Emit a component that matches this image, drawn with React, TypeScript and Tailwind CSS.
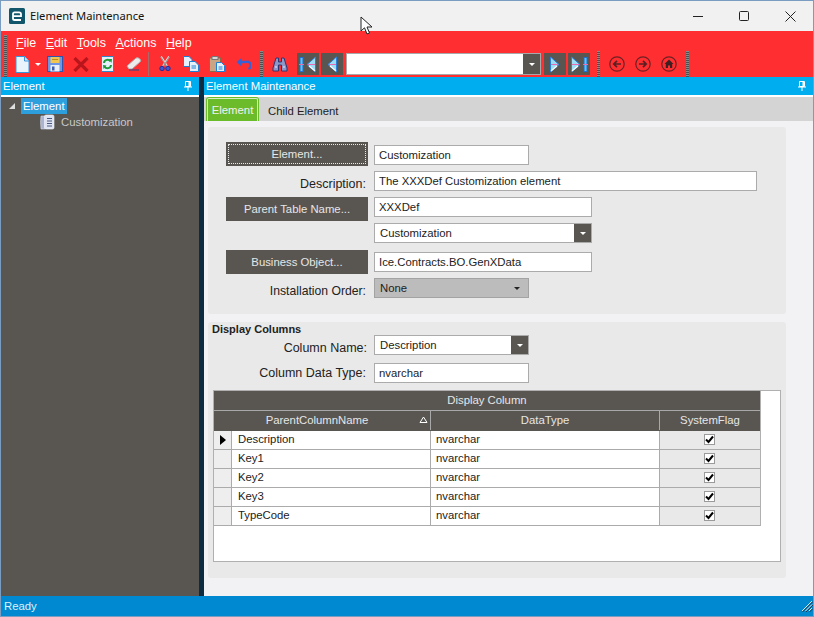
const rows = ['Description', 'Key1', 'Key2', 'Key3', 'TypeCode'];

function Grip({ className = '' }: { className?: string }) {
  return (
    <div
      className={`w-[3px] bg-[repeating-linear-gradient(to_bottom,#8a8a8a_0,#8a8a8a_1px,#4f4f4f_1px,#4f4f4f_2px)] ${className}`}
    />
  );
}

function PinIcon() {
  return (
    <svg width="8" height="10" viewBox="0 0 8 10">
      <path d="M1.5 .5 H6.5 V5.5 H1.5 Z" fill="none" stroke="#fff" />
      <path d="M4.5 1 H6 V5 H4.5 Z" fill="#fff" />
      <path d="M0 6 H8 M4 6 V10" stroke="#fff" />
    </svg>
  );
}

function ActionButton({ label, focused }: { label: string; focused?: boolean }) {
  return (
    <button className="w-[142px] h-6 bg-[#595652] text-[#e6e6e6] flex items-center justify-center shrink-0 p-[2px]">
      <span
        className={`w-full h-full flex items-center justify-center ${focused ? 'border border-dotted border-[#e8e8e8]' : ''}`}
      >
        {label}
      </span>
    </button>
  );
}

function TextBox({ value, width }: { value: string; width: string }) {
  return (
    <div className={`h-5 bg-white border border-[#ababab] px-1 text-[#222] leading-[18px] ${width}`}>{value}</div>
  );
}

function ComboBox({ value, width }: { value: string; width: string }) {
  return (
    <div className={`h-5 bg-white border border-[#ababab] flex text-[#222] ${width}`}>
      <span className="flex-1 pl-[5px] leading-[18px]">{value}</span>
      <span className="w-[17px] bg-[#595652] flex items-center justify-center">
        <span className="w-0 h-0 border-x-[3px] border-x-transparent border-t-[3px] border-t-white" />
      </span>
    </div>
  );
}

function NavButton({ children }: { children: React.ReactNode }) {
  return <div className="w-[22px] h-[22px] bg-[#595652] flex items-center justify-center shrink-0">{children}</div>;
}

function TriLeft() {
  return (
    <svg width="12" height="17" viewBox="0 0 12 17">
      <path d="M10.5 1 L2 8.5 L10.5 16 Z" fill="#9fdcf5" stroke="#2a7fd8" strokeWidth="1" />
      <path d="M3 8.5 H10" stroke="#e86bb0" strokeWidth="1" />
      <path d="M4 10 L10 15" stroke="#fff" strokeWidth="1.2" />
    </svg>
  );
}

function TriRight() {
  return (
    <svg width="12" height="17" viewBox="0 0 12 17">
      <path d="M1.5 1 L10 8.5 L1.5 16 Z" fill="#9fdcf5" stroke="#2a7fd8" strokeWidth="1" />
      <path d="M2 8.5 H9" stroke="#e86bb0" strokeWidth="1" />
      <path d="M2 15 L8 10" stroke="#fff" strokeWidth="1.2" />
    </svg>
  );
}

function Bar() {
  return (
    <svg width="5" height="15" viewBox="0 0 5 15">
      <rect x="1" y="0.5" width="3" height="14" fill="#63c3f2" stroke="#1c6fd0" strokeWidth="1" />
      <path d="M0 7.5 H5" stroke="#e86bb0" />
    </svg>
  );
}

function DocIcon() {
  return (
    <svg width="15" height="17" viewBox="0 0 15 17">
      <path d="M1 .5 H9.5 L14 5 V16.5 H1 Z" fill="#e9f3fb" stroke="#3a94dc" />
      <path d="M9.5 .5 V5 H14" fill="#cfe5f5" stroke="#3a94dc" />
    </svg>
  );
}

function SaveIcon() {
  return (
    <svg width="16" height="16" viewBox="0 0 16 16">
      <rect x=".5" y=".5" width="15" height="15" fill="#6f96e4" stroke="#2c55b0" />
      <rect x="3.5" y="1" width="9" height="6" fill="#f3c64f" />
      <rect x="5" y="3" width="6" height="1" fill="#b98c1f" />
      <rect x="3.5" y="9" width="9" height="6.5" fill="#e9eef8" />
      <rect x="5" y="10.5" width="2.5" height="4" fill="#3c5fb0" />
    </svg>
  );
}

function DeleteIcon() {
  return (
    <svg width="16" height="15" viewBox="0 0 16 15">
      <path d="M1.5 1 L14.5 14 M14.5 1 L1.5 14" stroke="#b8161c" strokeWidth="3.2" />
    </svg>
  );
}

function RefreshIcon() {
  return (
    <svg width="13" height="16" viewBox="0 0 13 16">
      <rect x=".5" y=".5" width="12" height="15" fill="#e4f1fa" stroke="#2f86c9" />
      <path d="M3 7 A3.5 3.5 0 0 1 9.5 5.5 M10 9 A3.5 3.5 0 0 1 3.5 10.5" fill="none" stroke="#1f9a3a" strokeWidth="2" />
      <path d="M8 3 L11 3 L10.5 7 Z M2 9 L5.5 9.5 L2.5 13 Z" fill="#1f9a3a" />
    </svg>
  );
}

function EraserIcon() {
  return (
    <svg width="16" height="14" viewBox="0 0 16 14">
      <path d="M1 9 L10 1 Q12 0 14 2 Q15.5 4 14 5 L6 12 H3 Z" fill="#ececec" stroke="#a9a9a9" />
      <path d="M3 13 H13" stroke="#3d4a80" strokeWidth="1.2" />
    </svg>
  );
}

function ScissorsIcon() {
  return (
    <svg width="12" height="16" viewBox="0 0 12 16">
      <path d="M2 .5 L8 10 M10 .5 L4 10" stroke="#dcdcdc" strokeWidth="1.8" />
      <path d="M1.5 .5 L7.5 10 M10.5 .5 L4.5 10" stroke="#444" strokeWidth=".5" />
      <circle cx="3" cy="12.5" r="2.2" fill="#3d57d0" stroke="#22309a" />
      <circle cx="9" cy="12.5" r="2.2" fill="#3d57d0" stroke="#22309a" />
    </svg>
  );
}

function CopyIcon() {
  return (
    <svg width="16" height="16" viewBox="0 0 16 16">
      <path d="M.5 .5 H6 L9 3.5 V10.5 H.5 Z" fill="#e4f1fa" stroke="#1d7ed6" />
      <path d="M6.5 5.5 H12 L15.5 9 V15.5 H6.5 Z" fill="#e4f1fa" stroke="#1d7ed6" />
      <path d="M8.5 10 H13 M8.5 12 H13" stroke="#1d7ed6" />
    </svg>
  );
}

function PasteIcon() {
  return (
    <svg width="16" height="16" viewBox="0 0 16 16">
      <rect x=".5" y="2" width="11" height="13.5" fill="#c9a584" stroke="#8b6a4b" />
      <rect x="3" y=".5" width="6" height="3" fill="#d8d8d8" stroke="#777" />
      <path d="M7.5 6.5 H12.5 L15.5 9.5 V15.5 H7.5 Z" fill="#e4f1fa" stroke="#1d7ed6" />
      <path d="M9.5 11 H13.5 M9.5 13 H13.5" stroke="#1d7ed6" />
    </svg>
  );
}

function UndoIcon() {
  return (
    <svg width="15" height="12" viewBox="0 0 15 12">
      <path d="M4 4 H9.5 A3.7 3.7 0 0 1 12.5 11" fill="none" stroke="#3563d6" strokeWidth="2.4" />
      <path d="M5.5 0 L.5 4 L5.5 8.5 Z" fill="#3563d6" />
    </svg>
  );
}

function BinocularsIcon() {
  return (
    <svg width="16" height="15" viewBox="0 0 16 15">
      <path d="M4 1 H6.5 V5 H9.5 V1 H12 L15 11 V14 H9.5 V8 H6.5 V14 H1 V11 Z" fill="#8d98c9" stroke="#2b3672" />
      <path d="M3 10 H5 M11 10 H13" stroke="#e8ecff" />
    </svg>
  );
}

function CircleIcon({ children }: { children: React.ReactNode }) {
  return (
    <svg width="16" height="16" viewBox="0 0 16 16">
      <circle cx="8" cy="8" r="7.2" fill="none" stroke="#6e2024" strokeWidth="1.2" />
      {children}
    </svg>
  );
}

export default function App() {
  return (
    <div className="relative w-[814px] h-[617px] flex flex-col overflow-hidden border border-[#7a9cc0] bg-[#f2f2f5] font-['Liberation_Sans',sans-serif] text-[11.33px]">
      {/* Title bar */}
      <div className="h-[30px] shrink-0 bg-[#f1f1f1] flex items-center pl-2 pr-[17px]">
        <svg width="16" height="16" viewBox="0 0 16 16">
          <rect width="16" height="16" rx="1.5" fill="#11566b" />
          <path d="M4 8.2 H12 V6 Q12 4.4 10 4.4 H5.6 Q4 4.4 4 6 V10.4 Q4 12 5.6 12 H12" fill="none" stroke="#fff" strokeWidth="1.8" />
        </svg>
        <span className="ml-[5px] font-['Noto_Sans',sans-serif] text-[11.2px] text-[#111]">Element Maintenance</span>
        <div className="ml-auto flex items-center gap-[36px]">
          <svg width="10" height="10" viewBox="0 0 10 10">
            <path d="M0 5.5 H10" stroke="#222" />
          </svg>
          <svg width="10" height="10" viewBox="0 0 10 10">
            <rect x=".5" y=".5" width="9" height="9" rx="1" fill="none" stroke="#222" />
          </svg>
          <svg width="11" height="11" viewBox="0 0 11 11">
            <path d="M.5 .5 L10.5 10.5 M10.5 .5 L.5 10.5" stroke="#222" />
          </svg>
        </div>
      </div>

      {/* Menu and toolbar */}
      <div className="h-[46px] shrink-0 bg-[#ff2e30] flex flex-col">
        <div className="h-[20px] flex items-center pl-[3px]">
          <Grip className="h-[17px] mt-1" />
          <div className="ml-[9px] flex gap-[9.5px] text-white pt-1 text-[12.5px]">
            <span><u>F</u>ile</span>
            <span><u>E</u>dit</span>
            <span><u>T</u>ools</span>
            <span><u>A</u>ctions</span>
            <span><u>H</u>elp</span>
          </div>
        </div>
        <div className="h-[26px] flex items-center pl-[3px]">
          <Grip className="h-[26px]" />
          <div className="ml-2 flex items-center"><DocIcon /></div>
          <span className="ml-[5px] w-0 h-0 border-x-[3px] border-x-transparent border-t-[3px] border-t-white" />
          <div className="ml-[6px] flex"><SaveIcon /></div>
          <div className="ml-[10px] flex"><DeleteIcon /></div>
          <div className="ml-[12px] flex"><RefreshIcon /></div>
          <div className="ml-[12px] flex"><EraserIcon /></div>
          <div className="ml-[6px] w-px h-6 bg-[#a86a6a]" />
          <div className="ml-[10px] flex"><ScissorsIcon /></div>
          <div className="ml-[12px] flex"><CopyIcon /></div>
          <div className="ml-[10px] flex"><PasteIcon /></div>
          <div className="ml-[11px] flex"><UndoIcon /></div>
          <Grip className="h-[26px] ml-[9px]" />
          <div className="ml-[9px] flex"><BinocularsIcon /></div>
          <div className="ml-[9px] flex gap-[2px]">
            <NavButton>
              <span className="flex items-center gap-px"><Bar /><TriLeft /></span>
            </NavButton>
            <NavButton><TriLeft /></NavButton>
          </div>
          <div className="ml-[3px] w-[195px] h-[22px] bg-white border border-[#a8a8a8] flex justify-end shrink-0">
            <span className="w-[17px] bg-[#595652] flex items-center justify-center">
              <span className="w-0 h-0 border-x-[3px] border-x-transparent border-t-[3px] border-t-white" />
            </span>
          </div>
          <div className="ml-[3px] flex gap-[2px]">
            <NavButton><TriRight /></NavButton>
            <NavButton>
              <span className="flex items-center gap-px"><TriRight /><Bar /></span>
            </NavButton>
          </div>
          <Grip className="h-[26px] ml-[7px]" />
          <div className="ml-[9px] flex gap-[10px]">
            <CircleIcon><path d="M12 8 H5 M8 4.8 L4.8 8 L8 11.2" fill="none" stroke="#5a1f22" strokeWidth="1.7" /></CircleIcon>
            <CircleIcon><path d="M4 8 H11 M8 4.8 L11.2 8 L8 11.2" fill="none" stroke="#5a1f22" strokeWidth="1.7" /></CircleIcon>
            <CircleIcon><path d="M8 3.5 L12.5 8 H11.2 V12 H9 V9.5 H7 V12 H4.8 V8 H3.5 Z" fill="#3f2022" /></CircleIcon>
          </div>
          <Grip className="h-[26px] ml-[9px]" />
        </div>
      </div>

      {/* Body */}
      <div className="flex-1 flex min-h-0">
        <aside className="w-[198px] shrink-0 flex flex-col">
          <div className="h-[18px] bg-[#00adef] text-white flex items-center justify-between pl-[2px] pr-[7px]">
            <span>Element</span>
            <PinIcon />
          </div>
          <div className="h-[2px] bg-white" />
          <div className="flex-1 bg-[#595652]">
            <div className="flex items-center h-4 mt-px pl-2">
              <span className="w-0 h-0 border-l-[6px] border-l-transparent border-b-[6px] border-b-[#ddd]" />
              <span className="ml-[6px] bg-[#2d9fdd] text-white px-[2px] h-4 leading-4">Element</span>
            </div>
            <div className="flex items-center h-4 pl-[39px]">
              <svg width="15" height="16" viewBox="0 0 15 16">
                <path d="M1 2 H5 V15 H1 Q0 8 1 2 Z" fill="#a9b3cf" stroke="#d8dce8" strokeWidth=".6" />
                <rect x="4.5" y="1" width="9.5" height="14" rx="1.5" fill="#dfe4f2" stroke="#f3f5fb" strokeWidth=".6" />
                <path d="M7 4.5 H12 M7 7 H12 M7 9.5 H12 M7 12 H12" stroke="#4a567f" />
              </svg>
              <span className="ml-[6px] text-[#c8c8c8]">Customization</span>
            </div>
          </div>
        </aside>
        <div className="w-[5px] shrink-0 bg-[#0d2c42] mt-0" />

        <main className="flex-1 flex flex-col min-w-0">
          <div className="h-[18px] shrink-0 bg-[#00adef] text-white flex items-center justify-between pl-[2px] pr-[7px]">
            <span>Element Maintenance</span>
            <PinIcon />
          </div>
          <div className="h-[2px] shrink-0 bg-white" />

          {/* Tabs */}
          <div className="h-[24px] shrink-0 bg-[#d4d4d4] flex items-end pl-[2px]">
            <div className="w-[53px] h-[24px] bg-[#6cbb2b] rounded-t-[3px] p-px pb-0">
              <div className="h-full border border-b-0 border-[#d8eec2] rounded-t-[2px] text-[#f2f2f2] flex items-center justify-center">
                Element
              </div>
            </div>
            <div className="ml-[9px] h-[22px] leading-[24px] text-[#222]">Child Element</div>
          </div>

          <div className="flex-1 min-h-0 pt-[6px] pl-[4px] pr-[27px]">
            {/* Element details */}
            <section className="h-[187px] bg-[#e9e9e9] rounded-[3px] pt-[15px] pl-[18px]">
              <div className="flex items-center gap-[6px] h-6">
                <ActionButton label="Element..." focused />
                <div className="pt-[1px]"><TextBox value="Customization" width="w-[155px]" /></div>
              </div>
              <div className="flex items-center gap-[6px] h-5 mt-[5px]">
                <span className="w-[142px] text-right text-[#222] pt-[6px] text-[12.5px] pr-[2px]">Description:</span>
                <TextBox value="The XXXDef Customization element" width="w-[383px]" />
              </div>
              <div className="flex items-start gap-[6px] h-6 mt-[6px]">
                <ActionButton label="Parent Table Name..." />
                <TextBox value="XXXDef" width="w-[218px]" />
              </div>
              <div className="h-5 mt-[2px] ml-[148px]">
                <ComboBox value="Customization" width="w-[218px]" />
              </div>
              <div className="flex items-center gap-[6px] h-6 mt-[7px]">
                <ActionButton label="Business Object..." />
                <TextBox value="Ice.Contracts.BO.GenXData" width="w-[218px]" />
              </div>
              <div className="flex items-center gap-[6px] h-5 mt-[4px]">
                <span className="w-[142px] text-right text-[#222] pt-[7px] text-[12.2px] pr-[2px]">Installation Order:</span>
                <div className="w-[155px] h-5 bg-[#bcbcbc] border border-[#a3a3a3] flex items-center justify-between pl-[5px] pr-2 text-[#222]">
                  <span>None</span>
                  <span className="w-0 h-0 border-x-[3px] border-x-transparent border-t-[3px] border-t-[#222]" />
                </div>
              </div>
            </section>

            {/* Display columns */}
            <section className="h-[256px] mt-[8px] bg-[#e9e9e9] rounded-[3px] pl-[4px] flex flex-col">
              <div className="font-bold text-[#222] text-[11px] leading-[14px]">Display Columns</div>
              <div className="flex items-center h-5 -mt-[1px]">
                <span className="w-[162px] text-right text-[#222] text-[12.5px] pr-[7px] pt-[7px]">Column Name:</span>
                <ComboBox value="Description" width="w-[155px]" />
              </div>
              <div className="flex items-center h-5 mt-[8px]">
                <span className="w-[162px] text-right text-[#222] text-[12.5px] pr-[8px]">Column Data Type:</span>
                <TextBox value="nvarchar" width="w-[155px]" />
              </div>

              {/* Grid */}
              <div className="mt-[7px] ml-px w-[568px] h-[172px] bg-white border border-[#b0b0b0]">
                <div className="w-[547px] border-r border-[#b0b0b0]">
                  <div className="h-[20px] bg-[#595652] text-[#e6e6e6] flex items-center justify-center border-b border-[#a8a8a8]">
                    Display Column
                  </div>
                  <div className="h-[20px] bg-[#595652] text-[#e6e6e6] flex border-b border-[#595652]">
                    <div className="w-[217px] relative flex items-center justify-center pr-[10px] border-r border-[#a8a8a8]">
                      ParentColumnName
                      <svg className="absolute right-[2px] top-[5px]" width="9" height="7" viewBox="0 0 9 7">
                        <path d="M4.5 1 L8 6.5 H1 Z" fill="none" stroke="#fff" strokeWidth="1" />
                      </svg>
                    </div>
                    <div className="w-[229px] flex items-center justify-center border-r border-[#a8a8a8]">DataType</div>
                    <div className="flex-1 flex items-center justify-center">SystemFlag</div>
                  </div>
                  {rows.map((name, i) => (
                    <div key={name} className="h-[19px] flex border-b border-[#ababab] text-[#222] bg-white">
                      <div className="w-[18px] bg-[#eeeeee] border-r border-[#ababab] flex items-center justify-center">
                        {i === 0 && (
                          <span className="w-0 h-0 border-y-[5px] border-y-transparent border-l-[6px] border-l-black" />
                        )}
                      </div>
                      <div className="w-[199px] pl-[6px] leading-[17px] border-r border-[#ababab]">{name}</div>
                      <div className="w-[229px] pl-[5px] leading-[17px] border-r border-[#ababab]">nvarchar</div>
                      <div className="flex-1 bg-[#e9e9e9] flex items-center justify-center pr-px pb-px">
                        <span className="w-[11px] h-[11px] bg-white border border-[#9a9a9a] flex items-center justify-center">
                          <svg width="9" height="9" viewBox="0 0 9 9">
                            <path d="M1 4.5 L3.5 7 L8 1.5" fill="none" stroke="#000" strokeWidth="2" />
                          </svg>
                        </span>
                      </div>
                    </div>
                  ))}
                </div>
              </div>
            </section>
          </div>
        </main>
      </div>

      {/* Status bar */}
      <div className="h-5 shrink-0 bg-[#0089d0] text-[#dff1fb] flex items-center justify-between pl-[3px]">
        <span>Ready</span>
        <svg width="12" height="12" viewBox="0 0 12 12">
          <path d="M11 1 L1 11 M11 4.5 L4.5 11 M11 8 L8 11" stroke="#d8e6ee" strokeWidth="1" />
          <path d="M12 1.5 L1.5 12 M12 5 L5 12 M12 8.5 L8.5 12" stroke="#1f3f55" strokeWidth="1" />
        </svg>
      </div>

      {/* Mouse pointer caught in the screenshot */}
      <svg className="absolute left-[359px] top-[15px]" width="14" height="20" viewBox="0 0 14 20">
        <path d="M1 1 V15 L4.5 11.8 L7 18 L9.5 17 L7 11 H12 Z" fill="#fff" stroke="#222" strokeWidth="1" />
      </svg>
    </div>
  );
}
